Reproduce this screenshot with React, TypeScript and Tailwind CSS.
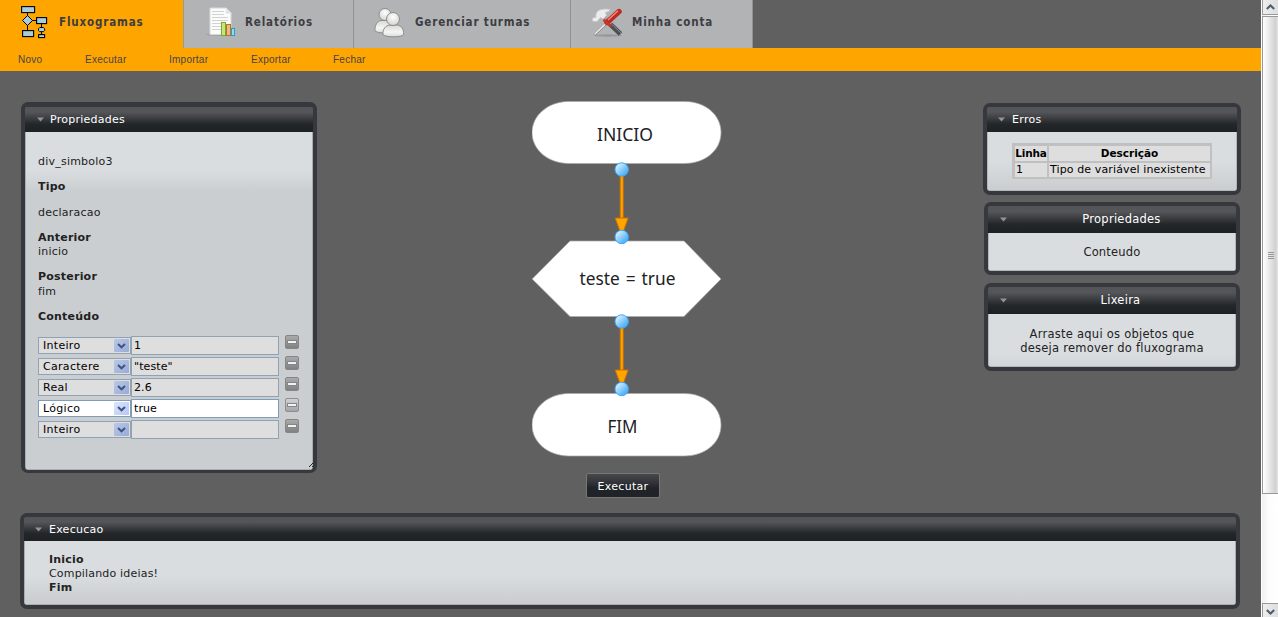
import type { ReactNode } from "react";

const verdana = "font-['DejaVu_Sans','Liberation_Sans',sans-serif]";

function FlowIcon() {
  return (
    <svg width="28" height="34" viewBox="0 0 28 34" fill="#a9cbdb" stroke="#000" strokeWidth="1.1">
      <path d="M6.500 7V26M11 15.500H16M20.500 18V32" fill="none" strokeWidth="1" />
      <rect x="0.600" y="1.600" width="13" height="6" />
      <path d="M6.500 10.500 11.500 15.500 6.500 20.500 1.500 15.500Z" strokeWidth="1" />
      <rect x="15.600" y="12.600" width="10" height="6" />
      <rect x="1.600" y="25.600" width="11" height="6" />
      <path d="M18.800 22.500h3.600l1.300 1.300v1.600l-1.300 1.300h-3.600L17.500 25.400v-1.600Z" strokeWidth="1" />
      <rect x="17.600" y="29.600" width="6" height="3" />
    </svg>
  );
}

function ReportIcon() {
  return (
    <svg width="32" height="32" viewBox="0 0 32 32">
      <ellipse cx="14" cy="27.500" rx="14" ry="1.500" fill="#888" opacity=".4" />
      <path d="M4 1H20L25 6V27.500H4Z" fill="#fbfbfb" stroke="#d8d8d4" />
      <path d="M20 1.500V6.500H25Z" fill="#ddd" stroke="#eee" />
      <path d="M6 4.500H18M6 7.500H18M6 10.500H22M6 13.500H22M6 16.500H15M6 19.500H15M6 22.500H15" stroke="#d2d2d2" strokeWidth="1.200" />
      <rect x="15.500" y="15.500" width="4" height="13" fill="#c6e67c" stroke="#79a92c" />
      <rect x="20.500" y="17.500" width="4" height="11" fill="#f0b880" stroke="#b97527" />
      <rect x="25.500" y="21.500" width="3" height="7" fill="#8bdcf8" stroke="#2d9cc6" />
    </svg>
  );
}

function UsersIcon() {
  return (
    <svg width="32" height="32" viewBox="0 0 32 32" stroke="#8c8c8c">
      <defs>
        <radialGradient id="head" cx=".5" cy=".35" r=".6">
          <stop offset="0" stopColor="#fff" />
          <stop offset="1" stopColor="#d7d7d4" />
        </radialGradient>
        <linearGradient id="torso" x2="0" y2="1">
          <stop stopColor="#d8d8d6" />
          <stop offset=".6" stopColor="#f5f5f3" />
          <stop offset="1" stopColor="#dadad8" />
        </linearGradient>
      </defs>
      <path d="M1 23C.5 17 3.500 13 7 12.500h6C17 13 19 18 18.500 23Q17 25 10 25T1 23Z" fill="url(#torso)" />
      <circle cx="11" cy="6.500" r="6" fill="url(#head)" />
      <path d="M9 26.500C8.500 21 11.500 17.500 16 17h7C27.500 17.500 30 21 29.500 26.500Q28 28.800 19.500 28.800T9 26.500Z" fill="url(#torso)" />
      <circle cx="19" cy="11" r="6.500" fill="url(#head)" />
    </svg>
  );
}

function ToolsIcon() {
  return (
    <svg width="32" height="32" viewBox="0 0 32 32">
      <ellipse cx="16" cy="28.500" rx="14" ry="1.200" fill="#777" opacity=".45" />
      <path d="M12 9 20 18" stroke="#a5a5a5" strokeWidth="3" />
      <path d="M18.500 17.500 28.500 27" stroke="#4d4f55" strokeWidth="5" />
      <path d="M19.500 17 29 26" stroke="#8a8c92" strokeWidth="1" />
      <path d="M1 14.500 0 11.500 4 10C3 4 8 1 18 2.500L17.500 4 13.500 5.500 14.500 8.500 11 12 8.500 10.500 5 14.500Z" fill="#ececec" stroke="#c4c4c4" strokeWidth=".7" />
      <path d="M14.500 16.500 3 27.500" stroke="#888" strokeWidth="2.200" />
      <path d="M14.500 16 3 27" stroke="#f4f4f4" strokeWidth="1.100" />
      <path d="M15 15.500 27 4.500" stroke="#bd2a20" strokeWidth="5.400" strokeLinecap="round" />
      <path d="M12.500 13.500 18 18.500" stroke="#c9352a" strokeWidth="3" strokeLinecap="round" />
      <path d="M16 13 26 3.800" stroke="#f58f7e" strokeWidth="1.300" />
    </svg>
  );
}

function Tab({ box, icon, label, text }: { box: string; icon: ReactNode; label: string; text: string }) {
  return (
    <div className={`flex h-12 shrink-0 items-start ${box}`}>
      {icon}
      <span className={`whitespace-nowrap text-[11.5px] leading-[18px] font-bold text-[#3d3d42] [font-stretch:condensed] font-['DejaVu_Sans_Condensed','DejaVu_Sans',sans-serif] ${text}`}>
        {label}
      </span>
    </div>
  );
}

function Header({ title, box, text }: { title: string; box: string; text: string }) {
  return (
    <div className={`flex shrink-0 items-center bg-[linear-gradient(#525458_0%,#54565a_20%,#3b3d41_45%,#24272a_68%,#1e2124_100%)] text-white ${box}`}>
      <svg width="7" height="5" viewBox="0 0 7 5" className="shrink-0">
        <path d="M0 .5H7L3.500 4.500Z" fill="#929496" />
      </svg>
      <span className={`whitespace-nowrap ${text}`}>{title}</span>
    </div>
  );
}

function Field({ kind, value, active }: { kind: string; value: string; active?: boolean }) {
  const fill = active ? "bg-white border-[#7f9db9]" : "bg-[#dedede] border-[#8fa3b5]";
  return (
    <div className="flex h-[21px] items-start text-[11px] text-black">
      <div className={`mt-px flex h-[17px] w-[93px] items-center justify-between border pl-1 pr-px ${fill}`}>
        <span className="leading-[15px] tracking-[0.3px]">{kind}</span>
        <span className={`flex h-[13px] w-[15px] items-center justify-center rounded-[1px] ${active ? "bg-[linear-gradient(135deg,#dbe5ff,#b4c8f6)]" : "bg-[linear-gradient(135deg,#b9c8e8,#98abd6)]"}`}>
          <svg width="9" height="6" viewBox="0 0 9 6">
            <path d="M1 1 4.500 4.300 8 1" fill="none" stroke="#3f5380" strokeWidth="2" />
          </svg>
        </span>
      </div>
      <div className={`h-[19px] w-[148px] border pl-[2px] leading-[18px] tracking-[0.1px] ${fill}`}>{value}</div>
      <div className={`ml-[6px] -mt-px flex h-[14px] w-[14px] items-center justify-center rounded-[2px] border ${active ? "border-[#8e8e8e] bg-[linear-gradient(#d2d2d2,#a4a4a4)]" : "border-[#858585] bg-[linear-gradient(#aaa,#818181)]"}`}>
        <span className="h-[4px] w-[10px] border border-[#858585] bg-[#eef3f8]" />
      </div>
    </div>
  );
}

function Connector({ y }: { y: number }) {
  return (
    <g transform={`translate(-0.3 ${y})`}>
      <rect x="88.500" y="6" width="3" height="45" fill="#ffa500" stroke="#cc7000" />
      <path d="M83.500 48.500H96.500L92 61H88Z" fill="#ffa500" stroke="#cc7000" />
      <circle cx="90" cy="0" r="6.700" fill="url(#ball)" stroke="#3ba9f8" />
      <circle cx="90" cy="67.500" r="6.700" fill="url(#ball)" stroke="#3ba9f8" />
    </g>
  );
}

function Flowchart() {
  return (
    <svg width="190" height="357" viewBox="0 0.5 190 357" className="font-['Noto_Sans',sans-serif] text-[18px]">
      <defs>
        <linearGradient id="ball" x1="0" y1="0" x2="1" y2="1">
          <stop offset=".1" stopColor="#e2f5ff" />
          <stop offset=".75" stopColor="#55b4fb" />
        </linearGradient>
      </defs>
      <g fill="#fff" stroke="#aaa" strokeWidth=".7">
        <path d="M37 .9H152C173 .9 189 14 189 32S173 63 152 63H37C16 63 0 49 0 32S16 .9 37 .9Z" />
        <path d="M38 140.500H152L189 178.500 152 216H38L.2 178.500Z" />
        <path transform="translate(0 292.500)" d="M37 .5H152C173 .5 189 14 189 32S173 63 152 63H37C16 63 0 49 0 32S16 .5 37 .5Z" />
      </g>
      <g fill="#202124">
        <text x="65" y="40.500" textLength="56" lengthAdjust="spacingAndGlyphs">INICIO</text>
        <text x="47.500" y="184.500" textLength="96" lengthAdjust="spacingAndGlyphs" wordSpacing="1.5">teste = true</text>
        <text x="75.500" y="332.500" textLength="30" lengthAdjust="spacingAndGlyphs">FIM</text>
      </g>
      <Connector y={69} />
      <Connector y={221} />
    </svg>
  );
}

function Scrollbar() {
  return (
    <div className="flex h-full w-[17px] shrink-0 flex-col border-l border-white bg-[linear-gradient(90deg,#f0f0f0,#fcfcfc_40%,#fff)]">
      <div className="flex h-[15px] items-center justify-center border-b border-l border-[#999] bg-[linear-gradient(90deg,#eee,#ddd)]">
        <svg width="9" height="6" viewBox="0 0 9 6"><path d="M.8 5 4.500 1.500 8.200 5" fill="none" stroke="#4d5b6f" strokeWidth="2" /></svg>
      </div>
      <div className="mt-[1px] flex h-[478px] flex-col items-center justify-center gap-px border border-r-0 border-[#999] bg-[linear-gradient(90deg,#fff,#f0f0f0_30%,#d0d0d0_85%,#e8e8e8)]">
        <span className="h-px w-[6px] bg-[#999]" />
        <span className="h-px w-[6px] bg-[#999]" />
        <span className="h-px w-[6px] bg-[#999]" />
        <span className="h-px w-[6px] bg-[#999]" />
      </div>
      <div className="mt-auto flex h-[14px] items-center justify-center border-t border-l border-[#999] bg-[linear-gradient(90deg,#eee,#ddd)] pt-[2px]">
        <svg width="9" height="6" viewBox="0 0 9 6"><path d="M.8 1 4.500 4.500 8.200 1" fill="none" stroke="#4d5b6f" strokeWidth="2" /></svg>
      </div>
    </div>
  );
}

const fields = [
  { kind: "Inteiro", value: "1" },
  { kind: "Caractere", value: '"teste"' },
  { kind: "Real", value: "2.6" },
  { kind: "Lógico", value: "true", active: true },
  { kind: "Inteiro", value: "" },
];

export default function App() {
  return (
    <div className={`flex h-[617px] w-[1278px] overflow-hidden bg-[#606060] text-[11px] text-[#222] ${verdana}`}>
      <div className="flex w-[1261px] shrink-0 flex-col">
        <div className="flex h-12">
          <Tab box="w-[183px] bg-[#ffa500] pl-[21px] pt-[5px] gap-[10px]" icon={<FlowIcon />} label="Fluxogramas" text="mt-[8px] tracking-[0.85px]" />
          <Tab box="w-[170px] border-l border-[#999] bg-[#b1b3b5] pl-[22px] pt-[7px] gap-[7px]" icon={<ReportIcon />} label="Relatórios" text="mt-[6px] tracking-[0.85px]" />
          <Tab box="w-[217px] border-l border-[#909294] bg-[#b1b3b5] pl-[20px] pt-[8px] gap-[9px]" icon={<UsersIcon />} label="Gerenciar turmas" text="mt-[5px] tracking-[0.85px]" />
          <Tab box="w-[183px] border-x border-[#909294] bg-[#b1b3b5] pl-[21px] pt-[7px] gap-[8px]" icon={<ToolsIcon />} label="Minha conta" text="mt-[6px] tracking-[0.85px]" />
        </div>
        <nav className="flex h-[23px] bg-[#ffa500] pl-[18px] text-[10px] leading-[23px] tracking-[0.25px] text-[#45434a] font-['Liberation_Sans',sans-serif]">
          <span className="w-[67px]">Novo</span>
          <span className="w-[84px]">Executar</span>
          <span className="w-[82px]">Importar</span>
          <span className="w-[82px]">Exportar</span>
          <span>Fechar</span>
        </nav>
        <div className="flex h-[442px] shrink-0 items-start">
          <section className="relative mt-[31px] ml-[21px] flex h-[371px] w-[296px] flex-col overflow-hidden rounded-[7px] border-4 border-t-[5px] border-b-[3px] border-[#36383d]">
            <Header title="Propriedades" box="h-[25px] pl-[12px]" text="pt-[2px] pl-[6px] tracking-[0.25px]" />
            <div className="flex-1 rounded-b-[2px] border-x border-b border-[#a9adb0] bg-[linear-gradient(#d9dddf_0px,#d9dddf_38px,#caced1_60px)] pt-[23px] pl-[12px] leading-[14px] tracking-[0.22px]">
              <p>div_simbolo3</p>
              <p className="mt-[11px] font-bold">Tipo</p>
              <p className="mt-[12px]">declaracao</p>
              <p className="mt-[11px] font-bold">Anterior</p>
              <p>inicio</p>
              <p className="mt-[11px] font-bold">Posterior</p>
              <p className="mt-px">fim</p>
              <p className="mt-[11px] mb-[12px] font-bold">Conteúdo</p>
              {fields.map((f, i) => <Field key={i} {...f} />)}
            </div>
            <svg width="7" height="7" viewBox="0 0 7 7" className="absolute right-[-3px] bottom-[3px]">
              <path d="M0 7 7 0M3 7 7 3" stroke="#222" />
            </svg>
          </section>
          <div className="mt-[30px] ml-[215px] flex w-[190px] flex-col items-center">
            <Flowchart />
            <button className="mt-[15px] mr-[8px] h-[25px] w-[74px] rounded-[2px] border border-[#777] bg-[linear-gradient(#46484c,#303237_40%,#202327_60%,#202327)] pt-px text-[11px] leading-[24px] tracking-[0.3px] text-white">Executar</button>
          </div>
          <div className="mt-8 ml-[261px] flex flex-col">
            <section className="h-[92px] w-[258px] overflow-hidden rounded-[7px] border-4 border-[#36383d]">
              <Header title="Erros" box="h-[25px] pl-[11px]" text="pt-[2px] pl-[7px] tracking-[0.3px]" />
              <div className="h-[59px] rounded-b-[2px] border-x border-b border-[#b3b7ba] bg-[linear-gradient(#d9dddf_50%,#caced1)] pt-[11px] pl-6">
                <div className="grid h-[36px] w-[200px] grid-cols-[32px_161px] grid-rows-[15px_14px] gap-[2px] border-[3px] border-r-2 border-[#c0c0c0] bg-[#c0c0c0] text-black">
                  <b className="bg-[#dedede] text-center text-[10.5px] leading-[15px] -tracking-[0.2px]">Linha</b>
                  <b className="bg-[#dedede] text-center text-[10.5px] leading-[15px]">Descrição</b>
                  <span className="bg-[#dedede] pl-px leading-[13px]">1</span>
                  <span className="bg-[#dedede] pl-px leading-[13px] tracking-[0.12px] whitespace-nowrap">Tipo de variável inexistente</span>
                </div>
              </div>
            </section>
            <section className="mt-[7px] ml-px h-[73px] w-[256px] overflow-hidden rounded-[7px] border-4 border-[#36383d]">
              <Header title="Propriedades" box="h-[27px] pl-[12px] text-[11.5px]" text="flex-1 pt-px text-center tracking-[0.25px]" />
              <div className="h-[38px] rounded-b-[2px] border-x border-b border-[#b3b7ba] bg-[#d9dddf] text-center text-[11.5px] leading-[38px] tracking-[0.2px]">Conteudo</div>
            </section>
            <section className="mt-[8px] ml-px h-[88px] w-[256px] overflow-hidden rounded-[7px] border-4 border-[#36383d]">
              <Header title="Lixeira" box="h-[27px] pl-[12px] text-[11.5px]" text="flex-1 pt-px pr-[2px] text-center tracking-[0.25px]" />
              <div className="h-[53px] rounded-b-[2px] border-x border-b border-[#b3b7ba] bg-[linear-gradient(#d9dddf_75%,#d2d6d8)] pt-[13px] text-center text-[11.5px] leading-[14px] tracking-[0.25px]">
                <p>Arraste aqui os objetos que</p>
                <p>deseja remover do fluxograma</p>
              </div>
            </section>
          </div>
        </div>
        <section className="ml-5 flex h-[96px] w-[1220px] shrink-0 flex-col overflow-hidden rounded-[7px] border-4 border-[#36383d]">
          <Header title="Execucao" box="h-[24px] pl-[11px]" text="pt-[2px] pl-[7px] tracking-[0.25px]" />
          <div className="flex-1 rounded-b-[2px] border-x border-b border-[#a9adb0] bg-[linear-gradient(#d9dddf_55%,#caced1_95%)] pt-[12px] pl-6 leading-[14px] tracking-[0.18px]">
            <p className="font-bold">Inicio</p>
            <p>Compilando ideias!</p>
            <p className="font-bold">Fim</p>
          </div>
        </section>
      </div>
      <Scrollbar />
    </div>
  );
}
